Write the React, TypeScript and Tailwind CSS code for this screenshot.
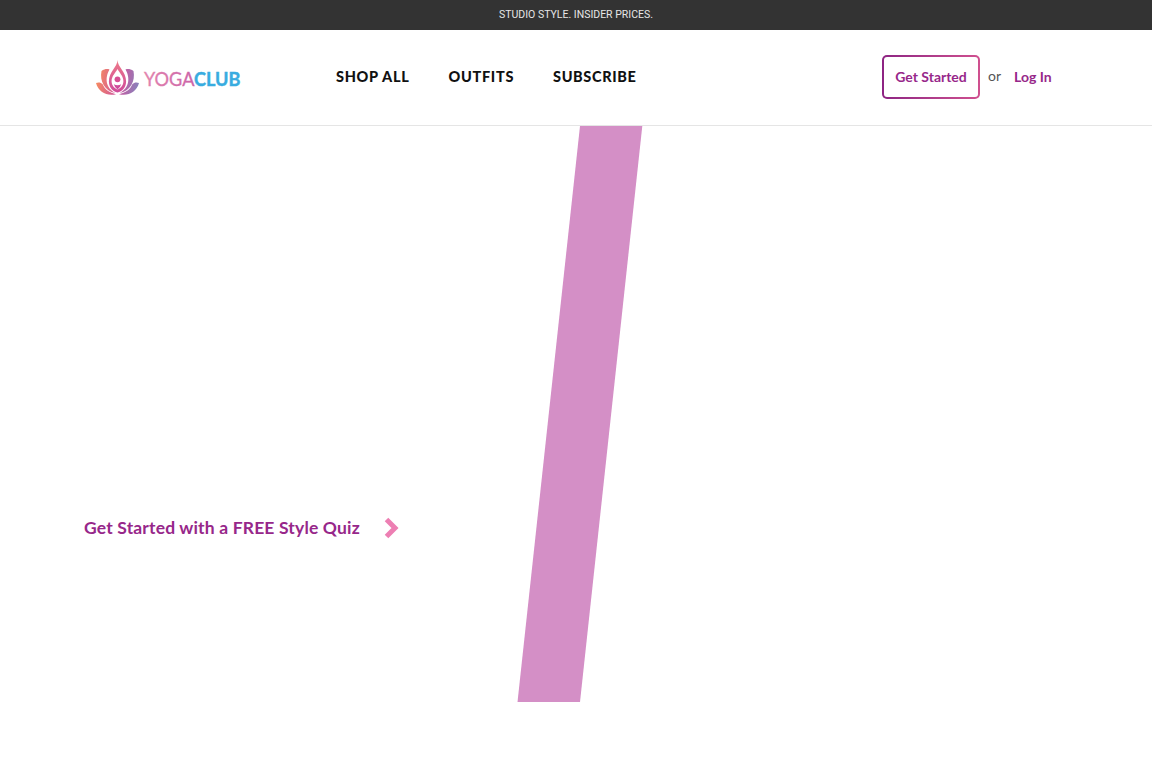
const navItems = [
  { label: "SHOP ALL", className: "w-[74px] tracking-[0.7px]" },
  { label: "OUTFITS", className: "ml-[38.5px] w-[67px] tracking-[0.7px]" },
  { label: "SUBSCRIBE", className: "ml-[37.5px] w-[84px] tracking-[0.65px]" },
];

const Logo = () => (
  <svg width="152" height="37" viewBox="0 0 152 37" role="img" aria-label="YogaClub">
    <defs>
      <linearGradient id="petals" gradientUnits="userSpaceOnUse" x1="2" y1="20" x2="44" y2="28">
        <stop offset="0" stopColor="#f58a62" />
        <stop offset="0.5" stopColor="#d0549c" />
        <stop offset="1" stopColor="#8584bd" />
      </linearGradient>
      <linearGradient id="flame" x1="0" y1="0" x2="0" y2="1">
        <stop offset="0" stopColor="#ee7a88" />
        <stop offset="1" stopColor="#cf4b9b" />
      </linearGradient>
      <linearGradient id="yoga" x1="0" y1="0" x2="1" y2="0">
        <stop offset="0" stopColor="#e385ae" />
        <stop offset="1" stopColor="#cb62a8" />
      </linearGradient>
    </defs>
    <g fill="url(#petals)">
      <path d="M1 23C3.5 22 6 22.5 7.5 24C10 30 14.5 32.5 21 34.2C12 36.5 3.5 32 1 23Z" />
      <path d="M44 23C41.5 22 39 22.5 37.5 24C35 30 30.5 32.5 24 34.2C33 36.5 41.5 32 44 23Z" />
      <path d="M6.5 11C9.5 9 12 8.5 14.5 9.5C10 17 10 28 20.5 33C9.5 31 4.5 21 6.5 11Z" />
      <path d="M38.5 11C35.5 9 33 8.5 30.5 9.5C35 17 35 28 24.5 33C35.5 31 40.5 21 38.5 11Z" />
    </g>
    <path
      fill="url(#flame)"
      fillRule="evenodd"
      d="M22.5 0C22.5 7 13.7 12 13.9 21.5C14 28 18 31.5 22.5 32.5C27 31.5 31 28 31.1 21.5C31.3 12 22.5 7 22.5 0ZM22.5 9C20.5 13 16.6 16 16.6 21.2C16.6 25.5 19.5 28 22.5 29.5C25.5 28 28.4 25.5 28.4 21.2C28.4 16 24.5 13 22.5 9Z"
    />
    <circle cx="22.5" cy="19.3" r="2.9" fill="#d64f94" />
    <path fill="#cf4b9b" d="M18.8 24.3Q22.5 26 26.2 24.3Q25 28 22.5 29.5Q20 28 18.8 24.3Z" />
    <text
      x="49"
      y="25.8"
      fill="url(#yoga)"
      stroke="url(#yoga)"
      strokeWidth="0.3"
      className="font-['Lato',sans-serif] text-[18.5px]"
      textLength="50.5"
      lengthAdjust="spacingAndGlyphs"
    >
      YOGA
    </text>
    <text
      x="99"
      y="25.8"
      fill="#38ace0"
      stroke="#38ace0"
      strokeWidth="0.4"
      className="font-['Lato',sans-serif] text-[18.5px] font-bold"
      textLength="46.5"
      lengthAdjust="spacingAndGlyphs"
    >
      CLUB
    </text>
  </svg>
);

const Header = () => (
  <header className="flex h-24 items-center border-b border-[#e5e5e5] pr-[100px] pl-[95px]">
    <a href="#" className="mt-[1px]">
      <Logo />
    </a>
    <nav className="ml-[89px] flex pb-[2px] font-['Lato',sans-serif] text-[14.5px] leading-5 font-black text-[#111] whitespace-nowrap">
      {navItems.map((item) => (
        <a key={item.label} href="#" className={item.className}>
          {item.label}
        </a>
      ))}
    </nav>
    <div className="ml-auto flex items-center pb-px text-sm whitespace-nowrap">
      <a
        href="#"
        className="h-[44px] w-[98px] rounded-[5px] bg-linear-to-r from-[#8e2483] to-[#d0508f] p-[2px] font-bold text-[#97278a]"
      >
        <span className="flex h-full items-center justify-center rounded-[3px] bg-white text-sm">
          Get Started
        </span>
      </a>
      <span className="ml-2 w-[26px] pb-[2px] text-sm text-[#555]">or</span>
      <a href="#" className="w-[38px] text-sm font-bold text-[#97278a]">
        Log In
      </a>
    </div>
  </header>
);

const Hero = () => (
  <section className="relative h-[576px]">
    <svg
      className="absolute top-0 left-[517px]"
      width="126"
      height="576"
      viewBox="0 0 126 576"
      aria-hidden="true"
    >
      <path d="M63 0H125.3L63 576H0.5Z" fill="#d48fc6" />
    </svg>
    <a
      href="#"
      className="flex w-[400px] items-center pt-[388px] pl-[84px] text-[17.5px] leading-[27px] font-bold tracking-[0.16px] whitespace-nowrap text-[#97278a]"
    >
      <span className="w-[300px] pb-px">Get Started with a FREE Style Quiz</span>
      <svg width="15" height="22" viewBox="0 0 15 22" fill="none" aria-hidden="true">
        <path d="M2.5 2.5L11 11L2.5 19.5" stroke="#ed7fb3" strokeWidth="5" />
      </svg>
    </a>
  </section>
);

export default function App() {
  return (
    <div className="h-[768px] overflow-hidden bg-white font-['Lato','Open_Sans',sans-serif]">
      <div className="flex h-[30px] items-center justify-center bg-[#333] font-['Roboto',sans-serif] text-[10.5px] text-[#e6e6e6]">
        STUDIO STYLE. INSIDER PRICES.
      </div>
      <Header />
      <Hero />
    </div>
  );
}
